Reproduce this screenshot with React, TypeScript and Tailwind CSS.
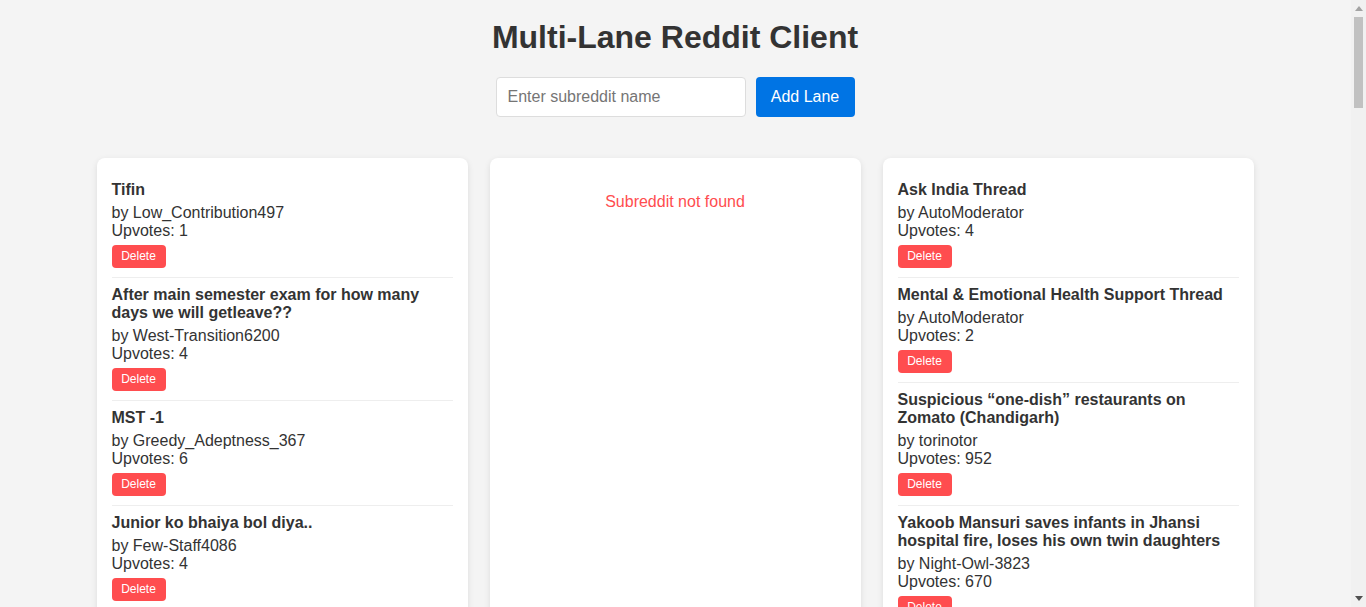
import React from "react";

type Post = { title: string; author: string; ups: number };

const lane1: Post[] = [
  { title: "Tifin", author: "Low_Contribution497", ups: 1 },
  { title: "After main semester exam for how many days we will getleave??", author: "West-Transition6200", ups: 4 },
  { title: "MST -1", author: "Greedy_Adeptness_367", ups: 6 },
  { title: "Junior ko bhaiya bol diya..", author: "Few-Staff4086", ups: 4 },
];

const lane3: Post[] = [
  { title: "Ask India Thread", author: "AutoModerator", ups: 4 },
  { title: "Mental & Emotional Health Support Thread", author: "AutoModerator", ups: 2 },
  { title: "Suspicious \u201cone-dish\u201d restaurants on Zomato (Chandigarh)", author: "torinotor", ups: 952 },
  { title: "Yakoob Mansuri saves infants in Jhansi hospital fire, loses his own twin daughters", author: "Night-Owl-3823", ups: 670 },
];

function PostItem({ p }: { p: Post }) {
  return (
    <div className="pt-[8px] pb-[9px] border-b border-[#eeeeee]">
      <h3 className="text-[16px] font-bold leading-[18px] mb-[5px] text-[#333333]">{p.title}</h3>
      <p className="text-[16px] leading-[18px] text-[#333333]">by {p.author}</p>
      <p className="text-[16px] leading-[18px] text-[#333333]">Upvotes: {p.ups}</p>
      <button className="mt-[5px] h-[23px] w-[54px] rounded-[4px] bg-[#ff4d4f] text-white text-[12px] leading-[23px] text-center">
        Delete
      </button>
    </div>
  );
}

function Lane({ children }: { children: React.ReactNode }) {
  return (
    <div className="w-[371px] bg-white rounded-[8px] shadow-[0_2px_6px_rgba(0,0,0,0.1)] p-[15px]">
      {children}
    </div>
  );
}

function Scrollbar() {
  return (
    <div className="w-[15px] h-full bg-[#f1f1f1] flex flex-col items-center shrink-0">
      <div className="h-[17px] w-full flex items-center justify-center">
        <svg width="8" height="5" viewBox="0 0 8 5">
          <polygon points="4,0 8,5 0,5" fill="#a3a3a3" />
        </svg>
      </div>
      <div className="w-[9px] h-[91px] bg-[#c1c1c1]" />
      <div className="flex-1" />
      <div className="h-[17px] w-full flex items-center justify-center">
        <svg width="8" height="5" viewBox="0 0 8 5">
          <polygon points="0,0 8,0 4,5" fill="#505050" />
        </svg>
      </div>
    </div>
  );
}

export default function App() {
  return (
    <div
      className="h-screen w-full flex overflow-hidden bg-[#f4f4f4] text-[#333333]"
      style={{ fontFamily: '"Liberation Sans", Arial, sans-serif' }}
    >
      <div className="flex-1 h-full overflow-hidden pr-[1px]">
        <h1 className="text-center text-[32px] font-bold leading-[37px] pt-[19px] text-[#333333]">
          Multi-Lane Reddit Client
        </h1>
        <div className="flex justify-center gap-[10px] mt-[21px]">
          <input
            type="text"
            placeholder="Enter subreddit name"
            className="w-[250px] h-[40px] border border-[#dddddd] rounded-[4px] bg-white px-[11px] text-[16px] placeholder:text-[#757575] outline-none"
          />
          <button className="w-[99px] h-[40px] rounded-[4px] bg-[#0074e4] text-white text-[16px]">
            Add Lane
          </button>
        </div>
        <div className="flex justify-center gap-[22px] mt-[41px] min-h-[3640px]">
          <Lane>
            {lane1.map((p, i) => (
              <PostItem key={i} p={p} />
            ))}
          </Lane>
          <Lane>
            <p className="text-center text-[16px] leading-[18px] text-[#ff4d4f] pt-[20px]">Subreddit not found</p>
          </Lane>
          <Lane>
            {lane3.map((p, i) => (
              <PostItem key={i} p={p} />
            ))}
          </Lane>
        </div>
      </div>
      <Scrollbar />
    </div>
  );
}
